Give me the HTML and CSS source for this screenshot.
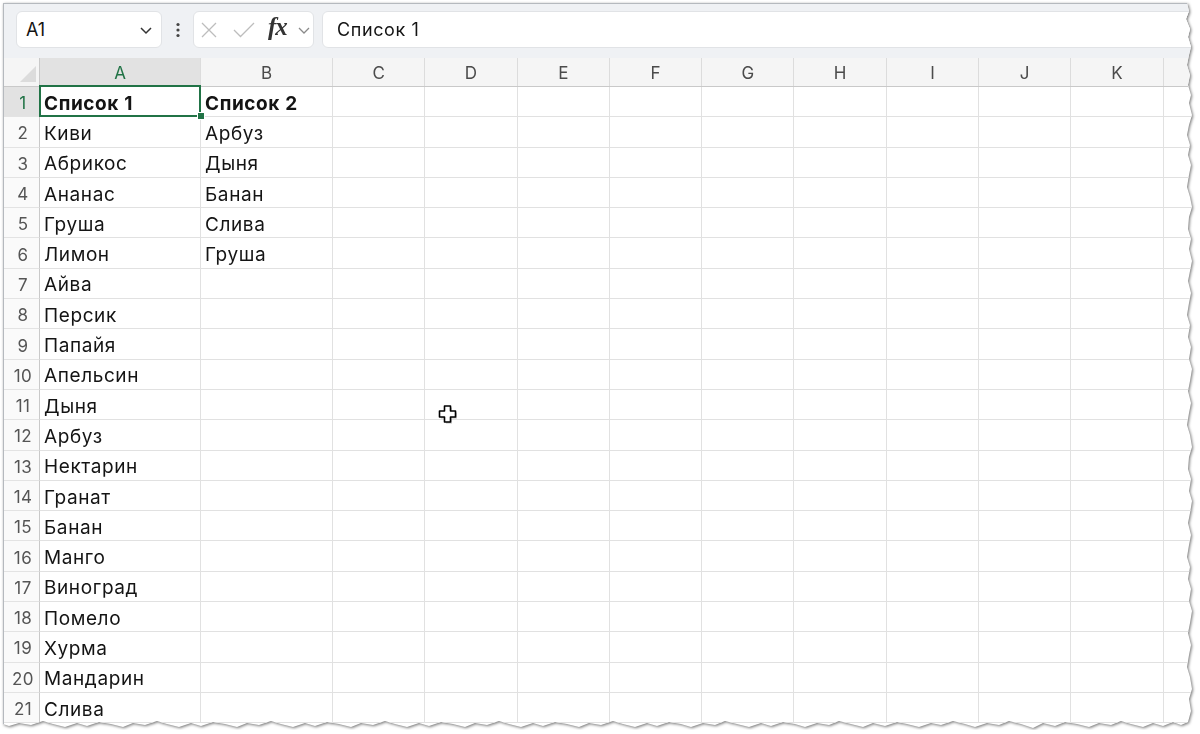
FILE: index.html
```html
<!DOCTYPE html>
<html>
  <head>
    <title>Список</title>
    <link rel="stylesheet" href="styles.css">
  </head>
  <body>
    <div class="frame">
      <div class="sheet">
        <div class="toolbar">
          <div class="namebox">
            <span>A1</span>
            <svg class="chev" width="14" height="10" viewBox="0 0 14 10"><path d="M2 3 L7 8 L12 3" fill="none" stroke="#333" stroke-width="1.5"/></svg>
          </div>
          <div class="dots">
            <svg width="6" height="16" viewBox="0 0 6 16"><circle cx="3" cy="2.5" r="1.6" fill="#444"/><circle cx="3" cy="8" r="1.6" fill="#444"/><circle cx="3" cy="13.5" r="1.6" fill="#444"/></svg>
          </div>
          <div class="fxbox">
            <svg class="cancel" width="18" height="18" viewBox="0 0 18 18"><path d="M2 2 L16 16 M16 2 L2 16" stroke="#bdbdbd" stroke-width="1.3"/></svg>
            <svg class="enter" width="24" height="18" viewBox="0 0 24 18"><path d="M2 9 L8.5 15.5 L22 2" fill="none" stroke="#bdbdbd" stroke-width="1.3"/></svg>
            <span class="fx">fx</span>
            <svg class="fxchev" width="14" height="10" viewBox="0 0 14 10"><path d="M2 3 L7 8 L12 3" fill="none" stroke="#8a8a8a" stroke-width="1.3"/></svg>
          </div>
          <div class="formula">Список 1</div>
        </div>

        <div class="headers">
          <div class="corner"></div>
          <div class="ch sel">A</div>
          <div class="ch">B</div>
          <div class="ch">C</div>
          <div class="ch">D</div>
          <div class="ch">E</div>
          <div class="ch">F</div>
          <div class="ch">G</div>
          <div class="ch">H</div>
          <div class="ch">I</div>
          <div class="ch">J</div>
          <div class="ch">K</div>
          <div class="ch"></div>
        </div>

        <div class="rows">
          <div class="row"><div class="rh sel">1</div><div class="cell bold active">Список 1<span class="handle"></span></div><div class="cell bold">Список 2</div><div class="rest"></div></div>
          <div class="row"><div class="rh">2</div><div class="cell">Киви</div><div class="cell">Арбуз</div><div class="rest"></div></div>
          <div class="row"><div class="rh">3</div><div class="cell">Абрикос</div><div class="cell">Дыня</div><div class="rest"></div></div>
          <div class="row"><div class="rh">4</div><div class="cell">Ананас</div><div class="cell">Банан</div><div class="rest"></div></div>
          <div class="row"><div class="rh">5</div><div class="cell">Груша</div><div class="cell">Слива</div><div class="rest"></div></div>
          <div class="row"><div class="rh">6</div><div class="cell">Лимон</div><div class="cell">Груша</div><div class="rest"></div></div>
          <div class="row"><div class="rh">7</div><div class="cell">Айва</div><div class="cell"></div><div class="rest"></div></div>
          <div class="row"><div class="rh">8</div><div class="cell">Персик</div><div class="cell"></div><div class="rest"></div></div>
          <div class="row"><div class="rh">9</div><div class="cell">Папайя</div><div class="cell"></div><div class="rest"></div></div>
          <div class="row"><div class="rh">10</div><div class="cell">Апельсин</div><div class="cell"></div><div class="rest"></div></div>
          <div class="row"><div class="rh">11</div><div class="cell">Дыня</div><div class="cell"></div><div class="rest"></div></div>
          <div class="row"><div class="rh">12</div><div class="cell">Арбуз</div><div class="cell"></div><div class="rest"></div></div>
          <div class="row"><div class="rh">13</div><div class="cell">Нектарин</div><div class="cell"></div><div class="rest"></div></div>
          <div class="row"><div class="rh">14</div><div class="cell">Гранат</div><div class="cell"></div><div class="rest"></div></div>
          <div class="row"><div class="rh">15</div><div class="cell">Банан</div><div class="cell"></div><div class="rest"></div></div>
          <div class="row"><div class="rh">16</div><div class="cell">Манго</div><div class="cell"></div><div class="rest"></div></div>
          <div class="row"><div class="rh">17</div><div class="cell">Виноград</div><div class="cell"></div><div class="rest"></div></div>
          <div class="row"><div class="rh">18</div><div class="cell">Помело</div><div class="cell"></div><div class="rest"></div></div>
          <div class="row"><div class="rh">19</div><div class="cell">Хурма</div><div class="cell"></div><div class="rest"></div></div>
          <div class="row"><div class="rh">20</div><div class="cell">Мандарин</div><div class="cell"></div><div class="rest"></div></div>
          <div class="row"><div class="rh">21</div><div class="cell">Слива</div><div class="cell"></div><div class="rest"></div></div>
        </div>

        <!-- mouse pointer over the grid -->
        <svg class="pointer" width="22" height="22" viewBox="0 0 22 22">
          <path d="M8 3.5 H14 V8.5 H19 V14.5 H14 V19.5 H8 V14.5 H3 V8.5 H8 Z" fill="#9a9a9a" opacity="0.6"/>
          <path d="M6.5 2 H12.5 V7 H17.5 V13 H12.5 V18 H6.5 V13 H1.5 V7 H6.5 Z" fill="#fff" stroke="#000" stroke-width="1.6" stroke-linejoin="round"/>
        </svg>
      </div>
    </div>
  </body>
</html>
```

FILE: styles.css
```css
* {
  box-sizing: border-box;
}

body {
  margin: 0;
  padding: 3px 0 0 3px;
  background: #fff;
  font-family: Inter, "Noto Sans", sans-serif;
  color: #141414;
}

.frame {
  width: 1197px;
  filter: drop-shadow(1px 1px 1.5px rgba(0, 0, 0, 0.55));
}

/* torn paper edge on the right and bottom */
.sheet {
  position: relative;
  width: 1192px;
  height: 727px;
  background: #fff;
  border-top: 1px solid #b5b9be;
  border-left: 1px solid #b5b9be;
  overflow: hidden;
  clip-path: polygon(
    0 0, 1184px 0, 1186px 8px, 1183px 16px, 1187px 26px, 1185px 34px, 1188px 44px,
    1186px 52px, 1184px 62px, 1187px 72px, 1185px 82px, 1188px 92px, 1186px 100px,
    1189px 112px, 1186px 122px, 1184px 132px, 1187px 142px, 1185px 152px, 1188px 162px,
    1186px 172px, 1184px 184px, 1187px 194px, 1189px 204px, 1186px 214px, 1185px 226px,
    1188px 236px, 1186px 246px, 1189px 258px, 1187px 268px, 1185px 278px, 1188px 290px,
    1186px 300px, 1184px 312px, 1187px 322px, 1185px 334px, 1188px 344px, 1186px 356px,
    1189px 366px, 1187px 378px, 1185px 388px, 1188px 400px, 1186px 410px, 1184px 422px,
    1187px 432px, 1189px 444px, 1186px 454px, 1185px 466px, 1188px 476px, 1186px 488px,
    1189px 498px, 1187px 510px, 1185px 520px, 1188px 532px, 1186px 542px, 1184px 554px,
    1187px 564px, 1185px 576px, 1188px 586px, 1186px 598px, 1189px 608px, 1187px 620px,
    1185px 630px, 1188px 642px, 1186px 652px, 1184px 664px, 1187px 674px, 1189px 686px,
    1186px 696px, 1188px 708px, 1185px 719px,
    1178px 722px, 1170px 719px, 1160px 723px, 1150px 720px, 1140px 724px, 1128px 721px,
    1118px 718px, 1108px 722px, 1096px 720px, 1086px 724px, 1074px 721px, 1062px 719px,
    1052px 723px, 1040px 720px, 1030px 725px, 1018px 721px, 1006px 718px, 996px 722px,
    984px 720px, 972px 724px, 962px 721px, 950px 718px, 938px 722px, 928px 720px,
    916px 724px, 904px 721px, 894px 719px, 882px 723px, 870px 720px, 860px 724px,
    848px 721px, 836px 718px, 826px 722px, 814px 720px, 802px 724px, 792px 721px,
    780px 719px, 768px 723px, 758px 720px, 746px 724px, 734px 721px, 722px 718px,
    712px 722px, 700px 720px, 688px 724px, 678px 721px, 666px 719px, 654px 723px,
    644px 720px, 632px 724px, 620px 721px, 610px 718px, 598px 722px, 586px 720px,
    576px 724px, 564px 721px, 552px 719px, 540px 723px, 530px 720px, 518px 724px,
    506px 721px, 496px 718px, 484px 722px, 472px 720px, 462px 724px, 450px 721px,
    438px 719px, 426px 723px, 416px 720px, 404px 724px, 392px 721px, 382px 718px,
    370px 722px, 358px 720px, 348px 724px, 336px 721px, 324px 719px, 312px 723px,
    302px 720px, 290px 724px, 278px 721px, 268px 718px, 256px 722px, 244px 720px,
    234px 724px, 222px 721px, 210px 719px, 198px 723px, 188px 720px, 176px 724px,
    164px 721px, 154px 718px, 142px 722px, 130px 720px, 120px 724px, 108px 721px,
    96px 719px, 84px 723px, 74px 720px, 62px 724px, 50px 721px, 40px 718px,
    28px 722px, 16px 720px, 6px 723px, 0 721px
  );
}

.toolbar {
  display: flex;
  align-items: flex-start;
  height: 54px;
  padding: 7px 0 0 12px;
  background: #eff1f4;
}

.namebox,
.fxbox,
.formula {
  height: 37px;
  background: #fff;
  border: 1px solid #e1e3e6;
  border-radius: 6px;
  display: flex;
  align-items: center;
}

.namebox {
  width: 146px;
  padding: 0 8px 0 9px;
  justify-content: space-between;
  font-size: 18px;
}

.dots {
  width: 31px;
  height: 37px;
  display: flex;
  align-items: center;
  justify-content: center;
}

.fxbox {
  width: 121px;
  padding: 0 0 0 6px;
}

.enter {
  margin-left: 14px;
}

.fx {
  font-family: "Liberation Serif", serif;
  font-style: italic;
  font-weight: bold;
  font-size: 25px;
  color: #333;
  margin: -5px 0 0 12px;
  letter-spacing: -1px;
}

.fxchev {
  margin-left: 10px;
}

.formula {
  flex: 1;
  margin-left: 8px;
  padding-left: 14px;
  font-size: 18px;
  letter-spacing: 0.6px;
  border-radius: 6px 0 0 6px;
}

.headers {
  display: grid;
  grid-template-columns: 36px 161px 132px repeat(9, 92.3px) 1fr;
  height: 29px;
  padding-top: 2px;
  background: #f5f5f5;
  border-bottom: 1px solid #c9c9c9;
}

.ch {
  display: flex;
  align-items: center;
  justify-content: center;
  border-right: 1px solid #dcdcdc;
  margin-top: -2px;
  padding-top: 2px;
  font-size: 17px;
  color: #4b4b4b;
}

.ch.sel {
  background: #e2e2e2;
  color: #217346;
}

.corner {
  position: relative;
  margin-top: -2px;
  border-right: 1px solid #c9c9c9;
}

.corner::after {
  content: "";
  position: absolute;
  right: 3px;
  bottom: 4px;
  border-left: 16px solid transparent;
  border-bottom: 16px solid #dcdcdc;
}

.row {
  display: grid;
  grid-template-columns: 36px 161px 132px 1fr;
  height: 30.3px;
}

.rh {
  display: flex;
  align-items: center;
  justify-content: center;
  padding: 3px 0 0 3px;
  background: #fafafa;
  border-right: 1px solid #c9c9c9;
  border-bottom: 1px solid #e3e3e3;
  font-size: 17px;
  letter-spacing: 0.4px;
  color: #555;
}

.rh.sel {
  background: #e2e2e2;
  color: #217346;
}

.cell {
  display: flex;
  align-items: center;
  padding: 3px 0 0 4px;
  border-right: 1px solid #e1e1e1;
  border-bottom: 1px solid #e1e1e1;
  font-size: 19px;
  letter-spacing: 0.6px;
  white-space: nowrap;
}

.cell.bold {
  font-weight: bold;
}

.rest {
  border-bottom: 1px solid #e1e1e1;
  background: repeating-linear-gradient(to right, transparent 0, transparent 91.3px, #e1e1e1 91.3px, #e1e1e1 92.3px);
}

/* selected cell A1 */
.active {
  position: relative;
}

.active::after {
  content: "";
  position: absolute;
  left: -1px;
  top: -2px;
  right: -1px;
  bottom: -1px;
  border: 2px solid #217346;
}

.handle {
  position: absolute;
  right: -5px;
  bottom: -4px;
  width: 8px;
  height: 8px;
  background: #217346;
  border: 1px solid #fff;
  z-index: 1;
}

.pointer {
  position: absolute;
  left: 434px;
  top: 400px;
}
```
